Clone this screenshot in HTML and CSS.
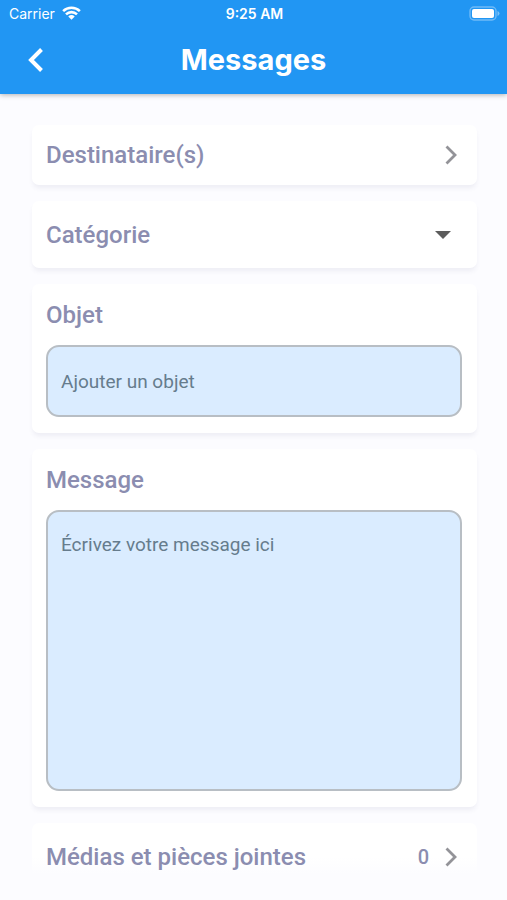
FILE: index.html
```html
<!DOCTYPE html>
<html lang="fr">
<head>
<meta charset="utf-8">
<meta name="viewport" content="width=device-width, initial-scale=1">
<title>Messages</title>
<link rel="stylesheet" href="styles.css">
</head>
<body>
<header class="top">
  <div class="status">
    <span class="carrier">Carrier
      <svg class="wifi" viewBox="0 0 20 14" aria-hidden="true">
        <path d="M1.200 5a12.600 12.600 0 0 1 17.600 0M4.200 8.400a8.400 8.400 0 0 1 11.600 0" fill="none" stroke="currentColor" stroke-width="2.700"/>
        <path d="M6.600 10.700a5 5 0 0 1 6.800 0L10 14z" fill="currentColor"/>
      </svg>
    </span>
    <span class="time">9:25 AM</span>
    <svg class="battery" viewBox="0 0 31 15" aria-hidden="true">
      <rect x="1" y="1" width="26" height="13" rx="4" fill="none" stroke="#fff" stroke-opacity=".35" stroke-width="1.400"/>
      <rect x="3" y="3" width="22" height="9" rx="2" fill="#fff"/>
      <path d="M28.500 5v5q2-.8 2-2.500t-2-2.500z" fill="#fff" fill-opacity=".4"/>
    </svg>
  </div>
  <div class="bar">
    <button class="back" type="button" aria-label="Retour">
      <svg viewBox="0 0 16 24" aria-hidden="true"><path d="M13.500 1.500 3 12l10.500 10.500" fill="none" stroke="currentColor" stroke-width="4"/></svg>
    </button>
    <h1 class="title">Messages</h1>
  </div>
</header>
<main class="form">
  <button class="card row recipients" type="button">
    <span>Destinataire(s)</span>
    <svg class="chevron" viewBox="0 0 12 20" aria-hidden="true"><path d="M1.500 1.500 10 10l-8.500 8.500" fill="none" stroke="currentColor" stroke-width="2.800"/></svg>
  </button>
  <div class="card category">
    <select class="select" aria-label="Catégorie">
      <option>Catégorie</option>
    </select>
    <svg class="caret" viewBox="0 0 16 8" aria-hidden="true"><path d="M0 0h16L8 8z" fill="currentColor"/></svg>
  </div>
  <div class="card field">
    <label class="label" for="objet">Objet</label>
    <input class="box" id="objet" type="text" placeholder="Ajouter un objet">
  </div>
  <div class="card field">
    <label class="label" for="message">Message</label>
    <textarea class="box area" id="message" placeholder="Écrivez votre message ici"></textarea>
  </div>
  <button class="card row media" type="button">
    <span>Médias et pièces jointes</span>
    <span class="count">0</span>
    <svg class="chevron" viewBox="0 0 12 20" aria-hidden="true"><path d="M1.500 1.500 10 10l-8.500 8.500" fill="none" stroke="currentColor" stroke-width="2.800"/></svg>
  </button>
</main>
</body>
</html>
```
FILE: styles.css
```css
* {
  box-sizing: border-box;
}

body {
  margin: 0;
  background: #fcfcff;
  color: #8b8db0;
  font-family: Roboto, "Liberation Sans", sans-serif;
}

button {
  margin: 0;
  border: 0;
  font: inherit;
  color: inherit;
  text-align: left;
  cursor: pointer;
}

.top {
  background: #2196f3;
  color: #fff;
  font-family: Inter, "Liberation Sans", sans-serif;
  box-shadow: 0 1px 5px rgba(0, 0, 0, 0.3);
}

.status {
  display: grid;
  grid-template-columns: 1fr auto 1fr;
  align-items: center;
  height: 26px;
  padding: 0 7px 0 9px;
  font-size: 14px;
}

.carrier {
  display: flex;
  align-items: center;
  gap: 7px;
}

.wifi {
  width: 19px;
  height: 14px;
}

.time {
  font-weight: 600;
}

.battery {
  width: 31px;
  height: 15px;
  justify-self: end;
}

.bar {
  display: grid;
  grid-template-columns: 48px 1fr 48px;
  align-items: center;
  height: 68px;
}

.back {
  display: flex;
  justify-content: flex-end;
  padding: 0 4px 0 0;
  background: none;
}

.back svg {
  width: 16px;
  height: 24px;
}

.title {
  margin: 0;
  font-size: 29px;
  line-height: 32px;
  font-weight: 700;
  text-align: center;
}

.form {
  display: flex;
  flex-direction: column;
  gap: 16px;
  padding: 31px 30px 24px 32px;
}

.card {
  border-radius: 7px;
  background: #fff;
  box-shadow: 0 4px 5px -1px rgba(60, 70, 120, 0.08);
  font-size: 24px;
  line-height: 28px;
  font-weight: 500;
}

.row {
  display: flex;
  align-items: center;
  gap: 16px;
  padding: 0 20px 0 14px;
}

.recipients {
  height: 60px;
}

.chevron {
  width: 12px;
  height: 20px;
  margin-left: auto;
  color: #939398;
}

.category {
  display: grid;
  align-items: center;
  height: 67px;
}

.select,
.caret {
  grid-area: 1 / 1;
}

.select {
  width: 100%;
  height: 100%;
  padding: 0 48px 0 14px;
  border: 0;
  appearance: none;
  background: none;
  color: inherit;
  font: inherit;
}

.caret {
  width: 16px;
  height: 8px;
  margin-right: 26px;
  justify-self: end;
  color: #5c5c5c;
  pointer-events: none;
}

.field {
  display: flex;
  flex-direction: column;
  gap: 16px;
  padding: 17px 15px 16px 14px;
}

.box {
  display: block;
  width: 100%;
  height: 72px;
  margin: 0;
  padding: 0 13px;
  border: 2px solid #b8bec4;
  border-radius: 13px;
  background: #daecff;
  color: #667c8d;
  font: 400 19px/24px Roboto, "Liberation Sans", sans-serif;
}

.area {
  height: 281px;
  padding: 21px 13px;
  resize: none;
}

.box::placeholder {
  color: #667c8d;
  opacity: 1;
}

.media {
  height: 68px;
  background: linear-gradient(#fff 50%, #fcfcff 75%);
  box-shadow: none;
}

.count {
  margin-left: auto;
  font-size: 20px;
}

.media .chevron {
  margin-left: 0;
}
```
